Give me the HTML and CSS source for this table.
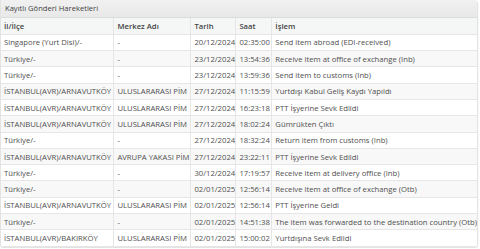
FILE: index.html
```html
<!DOCTYPE html>
<html>
<head>
<meta charset="utf-8">
<link rel="stylesheet" href="styles.css">
</head>
<body>
<div class="panel">
  <div class="panel-title">Kayıtlı Gönderi Hareketleri</div>
  <table class="moves">
    <thead>
      <tr><th class="c1">İl/İlçe</th><th class="c2">Merkez Adı</th><th class="c3">Tarih</th><th class="c4">Saat</th><th class="c5">İşlem</th></tr>
    </thead>
    <tbody>
      <tr><td>Singapore (Yurt Disi)/-</td><td>-</td><td>20/12/2024</td><td>02:35:00</td><td>Send item abroad (EDI-received)</td></tr>
      <tr><td>Türkiye/-</td><td>-</td><td>23/12/2024</td><td>13:54:36</td><td>Receive item at office of exchange (Inb)</td></tr>
      <tr><td>Türkiye/-</td><td>-</td><td>23/12/2024</td><td>13:59:36</td><td>Send item to customs (Inb)</td></tr>
      <tr><td>İSTANBUL(AVR)/ARNAVUTKÖY</td><td>ULUSLARARASI PİM</td><td>27/12/2024</td><td>11:15:59</td><td>Yurtdışı Kabul Geliş Kaydı Yapıldı</td></tr>
      <tr><td>İSTANBUL(AVR)/ARNAVUTKÖY</td><td>ULUSLARARASI PİM</td><td>27/12/2024</td><td>16:23:18</td><td>PTT İşyerine Sevk Edildi</td></tr>
      <tr><td>İSTANBUL(AVR)/ARNAVUTKÖY</td><td>ULUSLARARASI PİM</td><td>27/12/2024</td><td>18:02:24</td><td>Gümrükten Çıktı</td></tr>
      <tr><td>Türkiye/-</td><td>-</td><td>27/12/2024</td><td>18:32:24</td><td>Return item from customs (Inb)</td></tr>
      <tr><td>İSTANBUL(AVR)/ARNAVUTKÖY</td><td>AVRUPA YAKASI PİM</td><td>27/12/2024</td><td>23:22:11</td><td>PTT İşyerine Sevk Edildi</td></tr>
      <tr><td>Türkiye/-</td><td>-</td><td>30/12/2024</td><td>17:19:57</td><td>Receive item at delivery office (Inb)</td></tr>
      <tr><td>Türkiye/-</td><td>-</td><td>02/01/2025</td><td>12:56:14</td><td>Receive item at office of exchange (Otb)</td></tr>
      <tr><td>İSTANBUL(AVR)/ARNAVUTKÖY</td><td>ULUSLARARASI PİM</td><td>02/01/2025</td><td>12:56:14</td><td>PTT İşyerine Geldi</td></tr>
      <tr><td>Türkiye/-</td><td>-</td><td>02/01/2025</td><td>14:51:38</td><td>The item was forwarded to the destination country (Otb)</td></tr>
      <tr><td>İSTANBUL(AVR)/BAKIRKÖY</td><td>ULUSLARARASI PİM</td><td>02/01/2025</td><td>15:00:02</td><td>Yurtdışına Sevk Edildi</td></tr>
    </tbody>
  </table>
</div>
</body>
</html>
```
FILE: styles.css
```css
html, body {
  margin: 0;
  padding: 0;
  background: #ffffff;
}
body {
  font-family: "Open Sans", "DejaVu Sans", sans-serif;
  font-size: 7.7px;
  color: #4f4f4f;
}
.panel {
  width: 478px;
  border: 1px solid #e3e3e3;
  border-top: none;
  border-radius: 0 4px 4px 4px;
  box-shadow: 0 1px 2px rgba(0,0,0,0.08);
  box-sizing: border-box;
  overflow: hidden;
}
.panel-title {
  height: 17px;
  line-height: 17px;
  padding-left: 4px;
  font-size: 7.6px;
  color: #3f3f3f;
  background: linear-gradient(#f1f1f1, #e8e8e8);
  border-bottom: 1px solid #dcdcdc;
  box-shadow: 0 1px 2px rgba(0,0,0,0.08);
  border-top-right-radius: 4px;
}
.moves {
  width: 100%;
  border-collapse: collapse;
}
.moves th, .moves td {
  height: 16.3px;
  padding: 0 0 0 3px;
  border-bottom: 1px solid #e6e6e6;
  border-right: 1px solid #e6e6e6;
  text-align: left;
  white-space: nowrap;
  box-sizing: border-box;
}
.moves th:last-child, .moves td:last-child {
  border-right: none;
}
.moves th {
  font-weight: 600;
  color: #444444;
  background: #f5f7f7;
}
.moves tbody tr:nth-child(even) td {
  background: #f8f8f8;
}
.c1 { width: 113px; }
.c2 { width: 77px; }
.c3 { width: 45px; }
.c4 { width: 36px; }
```
